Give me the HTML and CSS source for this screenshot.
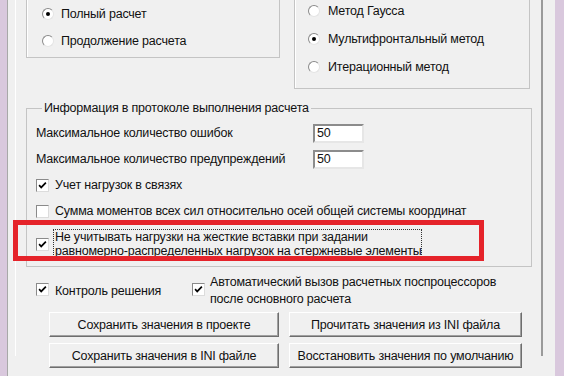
FILE: index.html
```html
<!DOCTYPE html>
<html lang="ru">
<head>
    <meta charset="UTF-8">
    <title>Параметры расчета</title>
    <link rel="stylesheet" href="styles.css">
</head>
<body>

<div class="window">
    <div class="page">

        <div class="top-row">
            <div class="group group-mode">
                <div class="opt-row"><span class="radio on"></span>Полный расчет</div>
                <div class="opt-row"><span class="radio"></span>Продолжение расчета</div>
            </div>
            <div class="group group-method">
                <div class="opt-row"><span class="radio"></span>Метод Гаусса</div>
                <div class="opt-row"><span class="radio on"></span>Мультифронтальный метод</div>
                <div class="opt-row"><span class="radio"></span>Итерационный метод</div>
            </div>
        </div>

        <fieldset class="info">
            <legend>Информация в протоколе выполнения расчета</legend>
            <div class="field-row">
                <span class="field-label">Максимальное количество ошибок</span>
                <span class="edit">50</span>
            </div>
            <div class="field-row">
                <span class="field-label">Максимальное количество предупреждений</span>
                <span class="edit">50</span>
            </div>
            <div class="check-row">
                <span class="check on"><svg viewBox="0 0 13 13"><polyline points="2.5,6 5,8.8 10.5,3.2"/></svg></span>
                Учет нагрузок в связях
            </div>
            <div class="check-row">
                <span class="check"></span>
                Сумма моментов всех сил относительно осей общей системы координат
            </div>
            <div class="check-row focused">
                <span class="check on"><svg viewBox="0 0 13 13"><polyline points="2.5,6 5,8.8 10.5,3.2"/></svg></span>
                <span class="focus-text">Не учитывать нагрузки на жесткие вставки при задании<br>равномерно-распределенных нагрузок на стержневые элементы</span>
                <!-- red annotation frame drawn over the dialog -->
                <div class="marker"></div>
            </div>
        </fieldset>

        <div class="options">
            <div class="check-row control">
                <span class="check on"><svg viewBox="0 0 13 13"><polyline points="2.5,6 5,8.8 10.5,3.2"/></svg></span>
                Контроль решения
            </div>
            <div class="check-row auto">
                <span class="check on"><svg viewBox="0 0 13 13"><polyline points="2.5,6 5,8.8 10.5,3.2"/></svg></span>
                <span>Автоматический вызов расчетных поспроцессоров<br>после основного расчета</span>
            </div>
        </div>

        <div class="buttons">
            <button class="btn">Сохранить значения в проекте</button>
            <button class="btn">Прочитать значения из INI файла</button>
            <button class="btn">Сохранить значения в INI файле</button>
            <button class="btn">Восстановить значения по умолчанию</button>
        </div>

    </div>
</div>

</body>
</html>
```

FILE: styles.css
```css
body {
    margin: 0;
    background: #d9c8dd;
    font-family: "Liberation Sans", Arial, sans-serif;
    font-size: 12.5px;
    letter-spacing: -0.2px;
    color: #111;
}
.window {
    margin-left: 7px;
    width: 547px;
    height: 376px;
    border-left: 1px solid #a8a8a8;
    background: #f0f0f0;
    overflow: hidden;
}
.page {
    margin-left: 7px;
    width: 515px;
    height: 376px;
    padding-left: 10px;
    border-left: 1px solid #fff;
    border-right: 2px solid #9a9a9a;
}

/* top radio groups, their tops are cut off */
.top-row {
    display: flex;
    align-items: flex-start;
    gap: 14px;
    margin-top: -20px;
}
.group {
    border: 1px solid #c4c4c4;
    box-shadow: inset 1px 1px 0 #fff;
}
.group-mode {
    width: 237px;
    padding: 19px 0 3px 15px;
}
.group-mode .opt-row {
    height: 27px;
}
.group-method {
    width: 221px;
    padding: 16px 0 7px 13px;
}
.opt-row {
    display: flex;
    align-items: center;
    height: 28px;
    white-space: nowrap;
}
.radio {
    width: 12px;
    height: 12px;
    border-radius: 50%;
    background: #fff;
    border: 1px solid;
    border-color: #8a8a8a #e4e4e4 #e4e4e4 #8a8a8a;
    box-sizing: border-box;
    margin-right: 7px;
    position: relative;
    flex: none;
}
.radio.on::after {
    content: "";
    position: absolute;
    left: 3px;
    top: 3px;
    width: 4px;
    height: 4px;
    border-radius: 50%;
    background: #000;
}
.group-method .radio {
    margin-right: 8px;
}

/* info group */
.info {
    margin: 12px 0 0 0;
    width: 506px;
    box-sizing: border-box;
    border: 1px solid #c4c4c4;
    padding: 5px 0 3px 9px;
}
.info legend {
    padding: 0 2px;
    margin-left: 6px;
    line-height: 14px;
}
.field-row {
    display: flex;
    align-items: center;
    height: 26px;
}
.field-label {
    width: 277px;
    white-space: nowrap;
}
.edit {
    width: 51px;
    height: 19px;
    box-sizing: border-box;
    background: #fff;
    border: 2px solid;
    border-color: #8c8c8c #e6e6e6 #e6e6e6 #8c8c8c;
    padding-left: 2px;
    line-height: 15px;
}
.check-row {
    display: flex;
    align-items: center;
    height: 26px;
    white-space: nowrap;
}
.check {
    width: 13px;
    height: 13px;
    box-sizing: border-box;
    background: #fff;
    border: 1px solid;
    border-color: #8a8a8a #dcdcdc #dcdcdc #8a8a8a;
    margin-right: 6px;
    flex: none;
}
.check svg {
    display: block;
    width: 11px;
    height: 11px;
}
.check polyline {
    fill: none;
    stroke: #000;
    stroke-width: 2;
}
.focused {
    height: auto;
    padding: 5px 0 4px;
    position: relative;
}
.focus-text {
    border: 1px dotted #333;
    line-height: 14px;
    padding: 0 0 0 1px;
    margin-left: -2px;
}
.marker {
    position: absolute;
    left: -23px;
    top: -4px;
    width: 471px;
    height: 41px;
    border: 5px solid #e5232a;
    box-sizing: border-box;
}

/* options under the group */
.options {
    display: flex;
    align-items: center;
    margin: 7px 0 0 10px;
}
.options .check-row {
    height: 34px;
}
.options .check {
    margin-bottom: 4px;
}
.control {
    width: 156px;
}
.auto .check {
    margin-right: 5px;
}
.auto span:last-child {
    line-height: 17px;
}

/* buttons */
.buttons {
    display: grid;
    grid-template-columns: 230px 233px;
    column-gap: 10px;
    row-gap: 6px;
    margin: 4px 0 0 23px;
}
.btn {
    height: 25px;
    font-family: inherit;
    font-size: 12.5px;
    letter-spacing: -0.2px;
    white-space: nowrap;
    color: #111;
    background: #f0f0f0;
    border: 1px solid;
    border-color: #fff #6e6e6e #6e6e6e #fff;
    box-shadow: inset -1px -1px 0 #a0a0a0;
    padding: 0;
}
```
